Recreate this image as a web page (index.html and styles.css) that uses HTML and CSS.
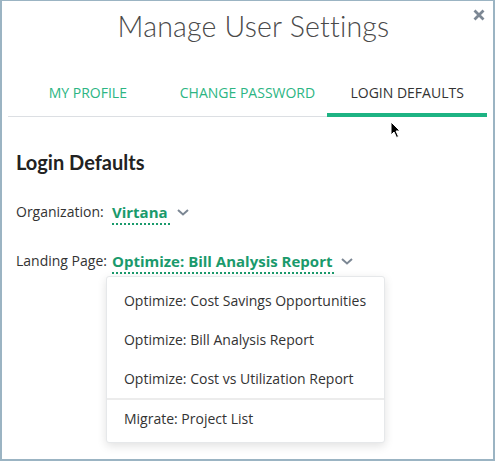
FILE: index.html
```html
<!DOCTYPE html>
<html>
<head>
<meta charset="utf-8">
<link rel="stylesheet" href="styles.css">
</head>
<body>
<div class="modal">
  <button class="close" aria-label="Close">
    <svg width="12" height="12" viewBox="0 0 12 12"><path d="M1.5 1.5 L10.5 10.5 M10.5 1.5 L1.5 10.5" stroke="#7c8794" stroke-width="2.8" stroke-linecap="butt"/></svg>
  </button>
  <h1 class="title">Manage User Settings</h1>
  <nav class="tabs">
    <a class="tab">MY PROFILE</a>
    <a class="tab">CHANGE PASSWORD</a>
    <a class="tab active">LOGIN DEFAULTS</a>
  </nav>
  <section class="content">
    <h2 class="heading">Login Defaults</h2>
    <div class="fields">
      <span class="label">Organization:</span>
      <div class="value-wrap">
        <span class="value">Virtana</span>
        <svg class="chev" width="12" height="7" viewBox="0 0 12 7"><path d="M1 1 L6 5.5 L11 1" fill="none" stroke="#7c8794" stroke-width="2"/></svg>
      </div>
      <span class="label">Landing Page:</span>
      <div class="value-wrap">
        <span class="value">Optimize: Bill Analysis Report</span>
        <svg class="chev" width="12" height="7" viewBox="0 0 12 7"><path d="M1 1 L6 5.5 L11 1" fill="none" stroke="#7c8794" stroke-width="2"/></svg>
        <ul class="menu">
          <li>Optimize: Cost Savings Opportunities</li>
          <li>Optimize: Bill Analysis Report</li>
          <li>Optimize: Cost vs Utilization Report</li>
          <li class="sep">Migrate: Project List</li>
        </ul>
      </div>
    </div>
  </section>
  <svg class="cursor" width="12" height="18" viewBox="0 0 12 18"><path d="M1 1 L1 14 L4 11 L6.5 16.5 L8.5 15.5 L6 10 L10 10 Z" fill="#000" stroke="#fff" stroke-width="1"/></svg>
</div>
</body>
</html>
```

FILE: styles.css
```css
* { box-sizing: border-box; }
html, body { margin: 0; padding: 0; }
body {
  width: 495px;
  height: 461px;
  background: #fff;
  font-family: "Open Sans", "Liberation Sans", sans-serif;
  color: #333;
}
.modal {
  position: relative;
  width: 495px;
  height: 461px;
  border: 2px solid #9bb4c3;
  border-top-width: 1px;
  padding: 0 6px;
  background: #fff;
  overflow: hidden;
}
.close {
  position: absolute;
  top: 8px;
  right: 8px;
  border: 0;
  background: none;
  padding: 0;
  width: 12px;
  height: 12px;
  line-height: 0;
}
.title {
  margin: 9px 0 0;
  padding-left: 12px;
  font-family: Lato, sans-serif;
  font-weight: 300;
  font-size: 28.5px;
  line-height: 32px;
  text-align: center;
  color: #4a4a4a;
  letter-spacing: 0.2px;
}
.tabs {
  display: grid;
  grid-template-columns: repeat(3, 1fr);
  margin-top: 41px;
  border-bottom: 1px solid #dcdfe3;
}
.tab {
  font-size: 14px;
  line-height: 20px;
  text-align: center;
  color: #2cb583;
  padding-bottom: 10px;
  border-bottom: 4px solid transparent;
  margin-bottom: -1px;
}
.tab.active {
  color: #333;
  border-bottom-color: #1db383;
}
.content {
  padding: 0 8px;
}
.heading {
  margin: 33px 0 0;
  font-family: Lato, sans-serif;
  font-weight: 700;
  font-size: 20px;
  line-height: 24px;
  color: #222;
}
.fields {
  display: grid;
  grid-template-columns: max-content 1fr;
  column-gap: 5px;
  row-gap: 26px;
  margin-top: 28px;
  font-size: 14px;
  line-height: 20px;
}
.label {
  color: #333;
}
.value-wrap {
  position: relative;
  display: flex;
  align-items: flex-start;
}
.value {
  display: inline-block;
  font-weight: 700;
  font-size: 15px;
  color: #1a9a6c;
  padding: 0 2px 1px 0;
  border-bottom: 2px dotted #1a9a6c;
}
.chev {
  margin: 7px 0 0 7px;
}
.menu {
  position: absolute;
  top: 25px;
  left: -6px;
  width: 279px;
  margin: 0;
  padding: 4px 0;
  list-style: none;
  background: #fff;
  border: 1px solid #e6e8ea;
  border-radius: 3px;
  box-shadow: 0 3px 10px rgba(0, 0, 0, 0.12);
  font-weight: 400;
  color: #333;
}
.menu li {
  padding: 10px 17px;
  line-height: 19px;
  white-space: nowrap;
}
.menu li.sep {
  border-top: 2px solid #ececec;
  padding-top: 9px;
}
.cursor {
  position: absolute;
  left: 388px;
  top: 120px;
}
```
